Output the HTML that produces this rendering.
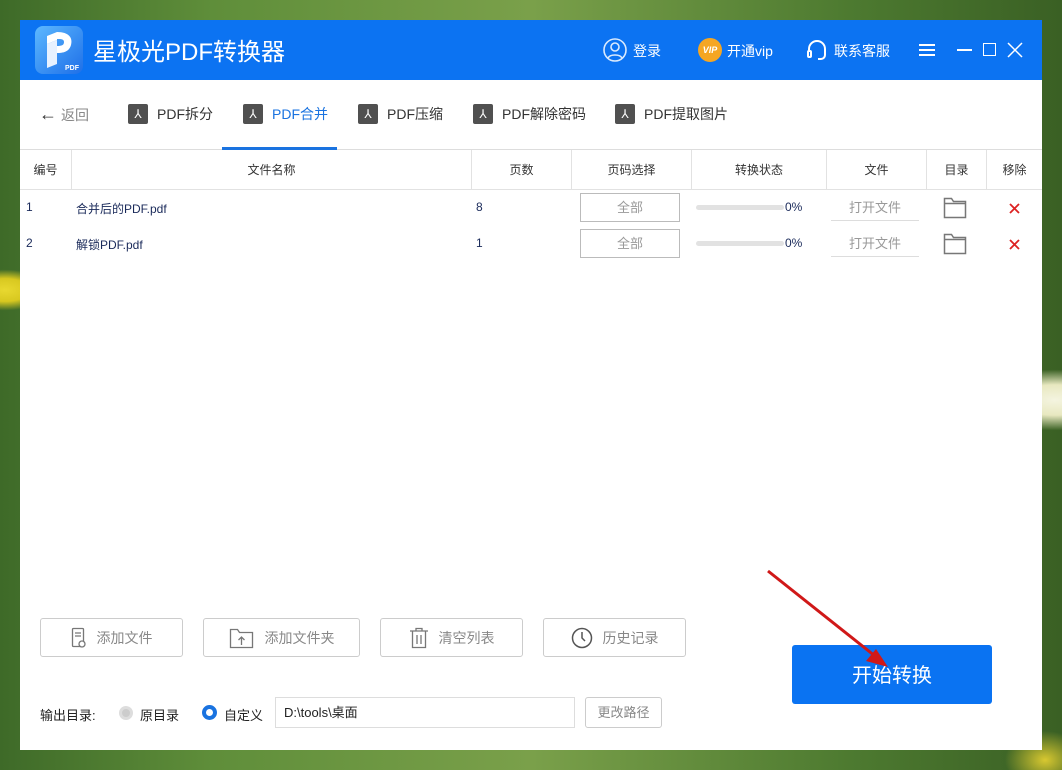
<!DOCTYPE html>
<html><head><meta charset="utf-8"><style>
*{margin:0;padding:0;box-sizing:border-box}
body{width:1062px;height:770px;overflow:hidden;position:relative;font-family:"Liberation Sans","Noto Sans CJK SC",sans-serif;
background:radial-gradient(ellipse at 1055px 400px,#f4f4e0 0,#e8e8c0 40px,transparent 80px),radial-gradient(ellipse at 5px 290px,#e8d830 0,#d8c820 25px,transparent 45px),radial-gradient(ellipse at 1045px 760px,#d8c830 0,transparent 40px),linear-gradient(90deg,#3e6a28,#5f8e3a 20%,#7aa04a 50%,#4d7a30 80%,#3a6024);}
.win{position:absolute;left:20px;top:20px;width:1022px;height:730px;background:#fff}
.title{height:60px;background:#0c73f2;color:#fff;position:relative}
.abs{position:absolute}
.tab{position:absolute;top:104px;font-size:14px;color:#333;display:flex;align-items:center}
.pic{width:20px;height:20px;background:#505050;border-radius:2px;margin-right:9px;color:#fff;font-size:12px;text-align:center;line-height:20px}
.th{position:absolute;top:150px;height:40px;line-height:40px;text-align:center;font-size:12px;color:#333;border-right:1px solid #e2e2e2}
.cell{position:absolute;font-size:12px;color:#1a2a5a}
.btn{position:absolute;top:618px;height:39px;border:1px solid #ccc;border-radius:3px;font-size:14px;color:#888;display:flex;align-items:center;justify-content:center}
.btn svg{margin-right:10px}
</style></head><body>
<div class="win">
 <div class="title">
  <div class="abs" style="left:15px;top:6px;width:48px;height:48px;background:linear-gradient(135deg,#5cb8ff,#1e6fe8);border-radius:8px;overflow:hidden">
   <svg class="abs" style="left:0;top:0" width="48" height="48"><path d="M12 10L22 6v8l-10 4z" fill="#fff"/><path d="M12 18l10-4v24l-10 4z" fill="#e8f2ff"/><path d="M22 6c12 0 16 6 14 13s-8 8-14 8v-7c5 0 7-1 7-4s-3-3-7-3z" fill="#fff"/></svg>
   <div class="abs" style="right:4px;bottom:2px;font-size:7px;font-weight:bold">PDF</div></div>
  <div class="abs" style="left:73px;top:12px;font-size:24px">星极光PDF转换器</div>
  <svg class="abs" style="left:583px;top:18px" width="24" height="24" viewBox="0 0 24 24" fill="none" stroke="#fff" stroke-width="1.6" opacity=".85"><circle cx="12" cy="12" r="11"/><circle cx="12" cy="9" r="4"/><path d="M5 20c2-4 12-4 14 0"/></svg>
  <div class="abs" style="left:613px;top:21px;font-size:14px">登录</div>
  <div class="abs" style="left:678px;top:18px;width:24px;height:24px;border-radius:50%;background:#f5a623;font-size:9px;font-weight:bold;line-height:24px;text-align:center;font-style:italic">VIP</div>
  <div class="abs" style="left:707px;top:21px;font-size:14px">开通vip</div>
  <svg class="abs" style="left:786px;top:19px" width="22" height="22" viewBox="0 0 22 22" fill="none" stroke="#fff" stroke-width="2"><path d="M3 13V10a8 8 0 0116 0v3"/><rect x="2" y="12" width="3" height="6" rx="1"/><path d="M19 13v3a4 4 0 01-4 4h-3"/></svg>
  <div class="abs" style="left:814px;top:21px;font-size:14px">联系客服</div>
  <div class="abs" style="left:899px;top:24px;width:16px;height:12px;border-top:2px solid #fff;border-bottom:2px solid #fff"><div style="margin-top:3px;height:2px;background:#fff"></div></div>
  <div class="abs" style="left:937px;top:29px;width:15px;height:2px;background:#fff"></div>
  <div class="abs" style="left:963px;top:23px;width:13px;height:13px;border:1.5px solid #fff"></div>
  <svg class="abs" style="left:987px;top:22px" width="16" height="16" stroke="#fff" stroke-width="1.5"><path d="M1 1l14 14M15 1L1 15"/></svg>
 </div>
 <div class="abs" style="left:0;top:129px;width:1022px;height:1px;background:#ddd"></div>
 <div class="abs" style="left:202px;top:127px;width:115px;height:3px;background:#1a73e0"></div>
</div>
<div class="tab" style="left:39px;color:#888"><span style="color:#333;font-size:18px;margin-right:4px">←</span>返回</div>
<div class="tab" style="left:128px"><div class="pic">⅄</div>PDF拆分</div>
<div class="tab" style="left:243px;color:#1a73e0"><div class="pic">⅄</div>PDF合并</div>
<div class="tab" style="left:358px"><div class="pic">⅄</div>PDF压缩</div>
<div class="tab" style="left:473px"><div class="pic">⅄</div>PDF解除密码</div>
<div class="tab" style="left:615px"><div class="pic">⅄</div>PDF提取图片</div>
<div class="abs" style="left:20px;top:189px;width:1022px;height:1px;background:#e2e2e2"></div>
<div class="th" style="left:20px;width:52px">编号</div>
<div class="th" style="left:72px;width:400px">文件名称</div>
<div class="th" style="left:472px;width:100px">页数</div>
<div class="th" style="left:572px;width:120px">页码选择</div>
<div class="th" style="left:692px;width:135px">转换状态</div>
<div class="th" style="left:827px;width:100px">文件</div>
<div class="th" style="left:927px;width:60px">目录</div>
<div class="th" style="left:987px;width:55px;border:0">移除</div>
<div class="cell" style="left:26px;top:200px">1</div><div class="cell" style="left:76px;top:200px">合并后的PDF.pdf</div><div class="cell" style="left:476px;top:200px">8</div>
<div class="cell" style="left:26px;top:236px">2</div><div class="cell" style="left:76px;top:236px">解锁PDF.pdf</div><div class="cell" style="left:476px;top:236px">1</div>
<div class="abs" style="left:580px;top:193px;width:100px;height:29px;border:1px solid #bbb;font-size:13px;color:#999;text-align:center;line-height:27px">全部</div>
<div class="abs" style="left:580px;top:229px;width:100px;height:29px;border:1px solid #bbb;font-size:13px;color:#999;text-align:center;line-height:27px">全部</div>
<div class="abs" style="left:696px;top:205px;width:88px;height:5px;border-radius:3px;background:#e2e2e2"></div>
<div class="abs" style="left:696px;top:241px;width:88px;height:5px;border-radius:3px;background:#e2e2e2"></div>
<div class="cell" style="left:785px;top:200px">0%</div><div class="cell" style="left:785px;top:236px">0%</div>
<div class="abs" style="left:831px;top:196px;width:88px;height:25px;border-bottom:1px solid #ddd;font-size:13px;color:#999;text-align:center;line-height:24px">打开文件</div>
<div class="abs" style="left:831px;top:232px;width:88px;height:25px;border-bottom:1px solid #ddd;font-size:13px;color:#999;text-align:center;line-height:24px">打开文件</div>
<svg class="abs" style="left:942px;top:196px" width="26" height="24" viewBox="0 0 26 24" fill="none" stroke="#777" stroke-width="1.5"><path d="M2.5 2.5h7l2 3h12v16h-21z M2.5 7.5h21"/></svg>
<svg class="abs" style="left:942px;top:232px" width="26" height="24" viewBox="0 0 26 24" fill="none" stroke="#777" stroke-width="1.5"><path d="M2.5 2.5h7l2 3h12v16h-21z M2.5 7.5h21"/></svg>
<svg class="abs" style="left:1009px;top:203px" width="11" height="11" stroke="#d22" stroke-width="1.8"><path d="M1 1l9 9M10 1l-9 9"/></svg>
<svg class="abs" style="left:1009px;top:239px" width="11" height="11" stroke="#d22" stroke-width="1.8"><path d="M1 1l9 9M10 1l-9 9"/></svg>
<div class="btn" style="left:40px;width:143px"><svg width="16" height="22" fill="none" stroke="#777" stroke-width="1.3"><rect x="1.5" y="1.5" width="11" height="18" rx="1"/><path d="M4 6h6M4 9h6"/><circle cx="11" cy="17" r="3" fill="#fff"/></svg>添加文件</div>
<div class="btn" style="left:203px;width:157px"><svg width="26" height="24" fill="none" stroke="#777" stroke-width="1.3"><path d="M1.5 3.5h7l2 3h13v15h-22z"/><path d="M12.5 19v-8M9.5 14l3-3 3 3"/></svg>添加文件夹</div>
<div class="btn" style="left:380px;width:143px"><svg width="20" height="22" fill="none" stroke="#777" stroke-width="1.3"><path d="M1 4h18M7 4V1.5h6V4M3.5 4v16.5h13V4M8 8v9M12 8v9"/></svg>清空列表</div>
<div class="btn" style="left:543px;width:143px"><svg width="22" height="22" fill="none" stroke="#555" stroke-width="1.5"><circle cx="11" cy="11" r="9.5"/><path d="M11 5v6l3 3"/></svg>历史记录</div>
<div class="abs" style="left:792px;top:645px;width:200px;height:59px;background:#0a73f2;border-radius:3px;color:#fff;font-size:20px;text-align:center;line-height:62px">开始转换</div>
<svg class="abs" style="left:760px;top:565px" width="140" height="110"><path d="M8 6L120 95" stroke="#d01818" stroke-width="3"/><path d="M128 102l-22-6 10-12z" fill="#d01818"/></svg>
<div class="abs" style="left:40px;top:705px;font-size:13px;color:#222">输出目录:</div>
<div class="abs" style="left:119px;top:706px;width:14px;height:14px;border-radius:50%;background:#ccc;border:3px solid #ddd"></div>
<div class="abs" style="left:140px;top:705px;font-size:13px;color:#222">原目录</div>
<div class="abs" style="left:202px;top:705px;width:15px;height:15px;border-radius:50%;border:4px solid #1a73e0"></div>
<div class="abs" style="left:224px;top:705px;font-size:13px;color:#222">自定义</div>
<div class="abs" style="left:275px;top:697px;width:300px;height:31px;border:1px solid #ddd;font-size:13px;color:#222;padding-left:8px;line-height:29px">D:\tools\桌面</div>
<div class="abs" style="left:585px;top:697px;width:77px;height:31px;border:1px solid #ccc;border-radius:3px;font-size:13px;color:#888;text-align:center;line-height:29px">更改路径</div>
</body></html>
